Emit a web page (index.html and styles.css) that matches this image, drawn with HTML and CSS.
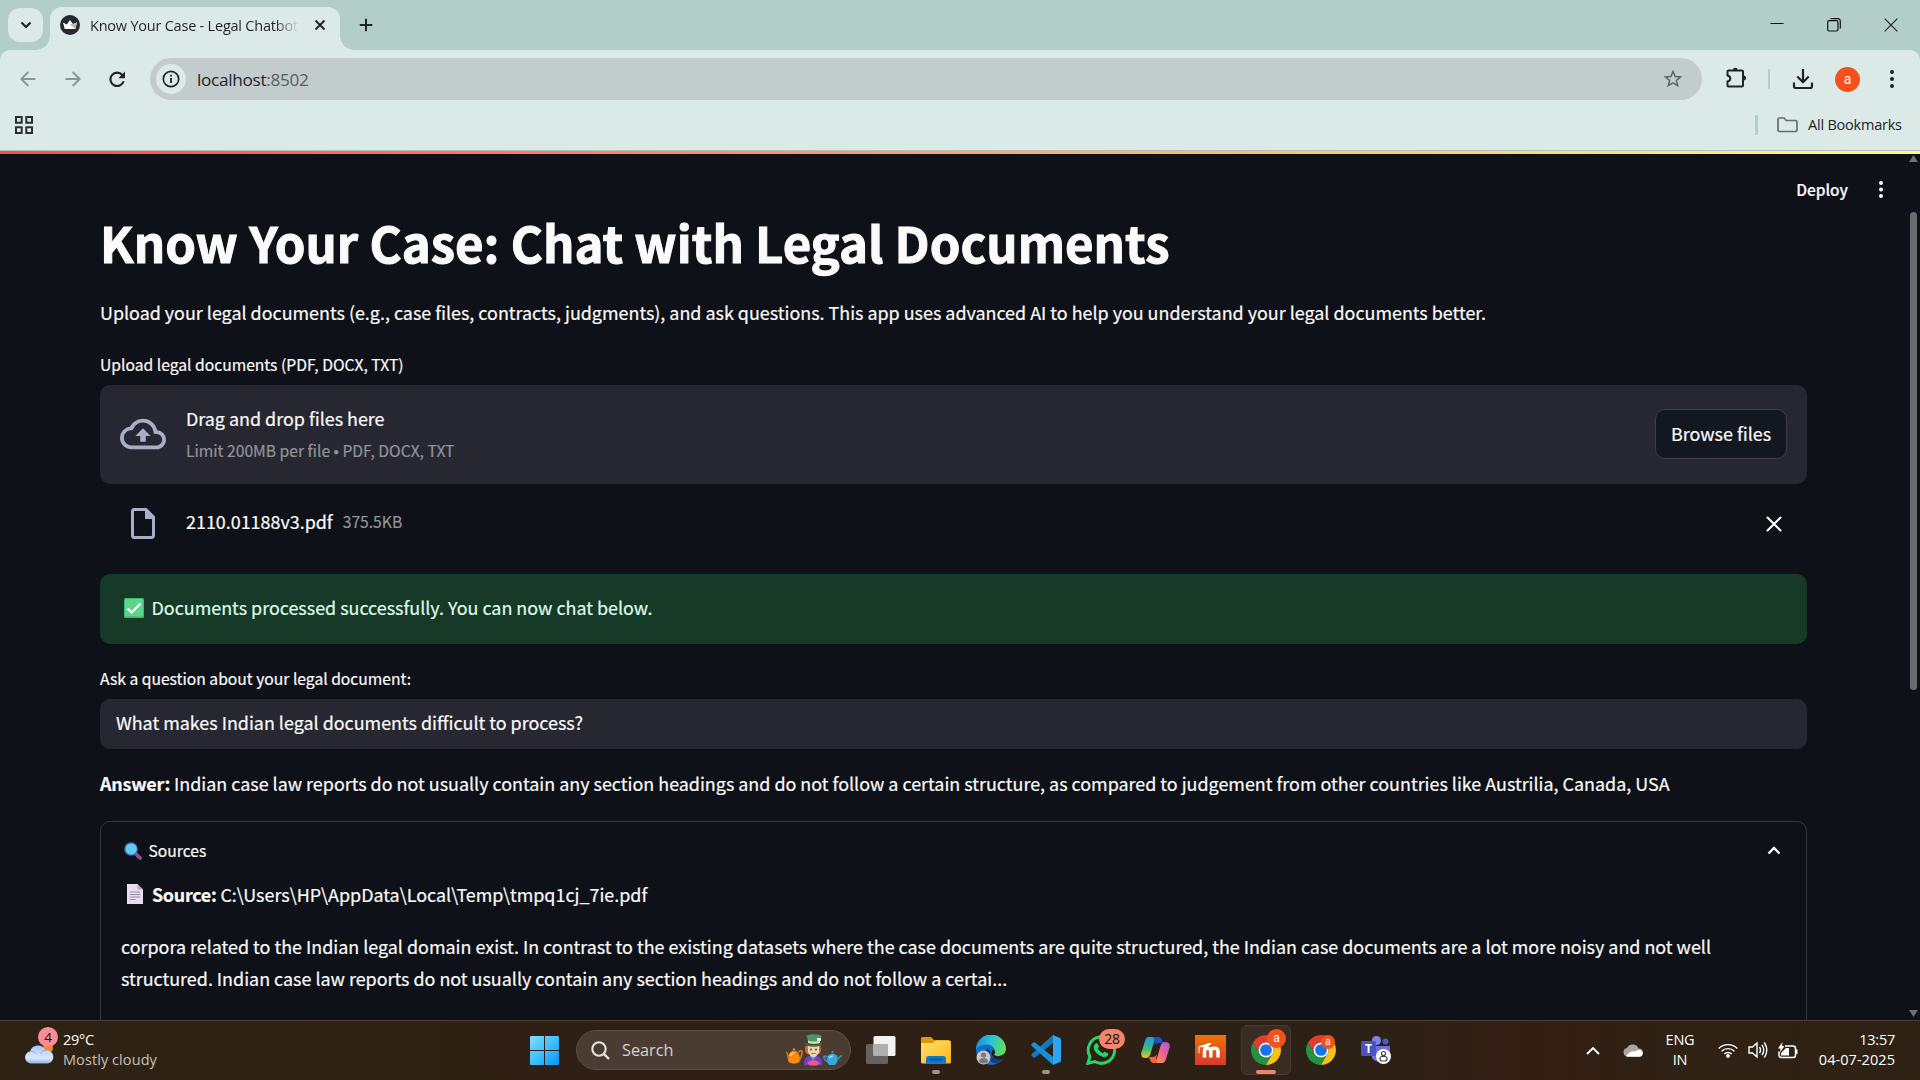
FILE: index.html
```html
<!DOCTYPE html>
<html lang="en">
<head>
<meta charset="utf-8">
<title>Know Your Case - Legal Chatbot</title>
<link rel="stylesheet" href="styles.css">
</head>
<body>
<svg class="defs" width="0" height="0" aria-hidden="true">
  <symbol id="chrome" viewBox="2 2 44 44">
    <path fill="#e33b2e" d="M24 13H43.05A22 22 0 0 0 4.95 13L14.47 29.5A11 11 0 0 1 24 13Z"/>
    <path fill="#229342" d="M4.95 13A22 22 0 0 0 24 46L33.53 29.5A11 11 0 0 1 14.47 29.5Z"/>
    <path fill="#fbc116" d="M24 46A22 22 0 0 0 43.05 13H24A11 11 0 0 1 33.53 29.5Z"/>
    <circle cx="24" cy="24" r="11" fill="#fff"/><circle cx="24" cy="24" r="8.6" fill="#1a73e8"/>
  </symbol>
</svg>
<div class="screen">
  <header class="tabstrip">
    <div class="tab-search"><svg width="12" height="8" viewBox="0 0 12 8"><path d="M1.5 1.5 6 6l4.500-4.500" fill="none" stroke="#1f2423" stroke-width="2.200"/></svg></div>
    <div class="tab">
      <svg class="favicon" width="20" height="20" viewBox="0 0 20 20"><circle cx="10" cy="10" r="10" fill="#262730"/><path d="M3 7.500 6.800 9.500 10 5l3.200 4.500L17 7.500 15.300 14H4.700Z" fill="#fff"/><path d="M10 9.500 17 7.500 15.300 14Z" fill="#b9b9bd"/></svg>
      <span class="tab-title">Know Your Case - Legal Chatbot</span>
      <svg class="tab-close" width="12" height="12" viewBox="0 0 12 12"><path d="M1.500 1.500l9 9M10.500 1.500l-9 9" stroke="#1f2423" stroke-width="1.900"/></svg>
    </div>
    <svg class="new-tab" width="14" height="14" viewBox="0 0 14 14"><path d="M7 .7v12.600M.7 7h12.600" stroke="#1f2423" stroke-width="2"/></svg>
    <div class="window-buttons">
      <svg width="14" height="14" viewBox="0 0 14 14"><path d="M.5 5.500h13" stroke="#111" stroke-width="1"/></svg>
      <svg width="14" height="14" viewBox="0 0 14 14"><rect x=".7" y="2.700" width="10.300" height="10.300" rx="1.500" fill="none" stroke="#111" stroke-width="1.200"/><path d="M3.500.7h7.300a2.500 2.500 0 0 1 2.500 2.500V10.500" fill="none" stroke="#111" stroke-width="1.200"/></svg>
      <svg width="14" height="14" viewBox="0 0 14 14"><path d="M.7.7l12.600 12.600M13.300.7.7 13.300" stroke="#222" stroke-width="1.200"/></svg>
    </div>
  </header>
  <div class="chrome">
    <div class="toolbar">
      <svg class="nav-icon" width="16" height="16" viewBox="0 0 16 16"><path d="M15.500 8H1.500M8.300 1 1.300 8l7 7" fill="none" stroke="#8b9694" stroke-width="1.900"/></svg>
      <svg class="nav-icon" width="16" height="16" viewBox="0 0 16 16"><path d="M.5 8h14M7.700 1l7 7-7 7" fill="none" stroke="#8b9694" stroke-width="1.900"/></svg>
      <svg class="nav-icon reload" width="17" height="17" viewBox="0 0 17 17"><path d="M14.600 10.200A6.700 6.700 0 1 1 13.300 4L15 5.700" fill="none" stroke="#1f2423" stroke-width="2.100"/><path d="M16 .6V7.200H9.400Z" fill="#1f2423"/></svg>
      <div class="omnibox">
        <span class="site-info"><svg width="18" height="18" viewBox="0 0 18 18"><circle cx="9" cy="9" r="7.700" fill="none" stroke="#1f2423" stroke-width="1.700"/><path d="M9 8v5M9 4.700v1.900" stroke="#1f2423" stroke-width="1.800"/></svg></span>
        <span class="url">localhost<span class="port">:8502</span></span>
        <svg class="star" width="20" height="20" viewBox="0 0 20 20"><path d="M10 2.500l2.100 5 5.400.4-4.100 3.500 1.300 5.300L10 13.900l-4.700 2.800 1.300-5.300L2.500 7.900l5.400-.4Z" fill="none" stroke="#5d6665" stroke-width="1.500"/></svg>
      </div>
      <svg class="ext" width="22" height="22" viewBox="0 0 22 22"><path d="M3.500 3.500H17a1 1 0 0 1 1 1V18.500a1 1 0 0 1-1 1H3.500a1 1 0 0 1-1-1V14.500C4.500 14 5.300 13 5.300 11.500S4.500 9 2.500 8.500V4.500a1 1 0 0 1 1-1Z" fill="none" stroke="#1f2423" stroke-width="2"/><path d="M8 3a2.300 2.300 0 0 1 4.600 0ZM18.500 8.500a2.500 2.500 0 0 1 0 5Z" fill="#1f2423"/></svg>
      <span class="bar-sep"></span>
      <svg class="dl" width="22" height="22" viewBox="0 0 22 22"><path d="M11 1v13M5.300 8.500 11 14.200l5.700-5.700" fill="none" stroke="#1f2423" stroke-width="2.200"/><path d="M2 14.500v3.800q0 1.700 1.700 1.700h14.600q1.700 0 1.700-1.700v-3.800" fill="none" stroke="#1f2423" stroke-width="2.200"/></svg>
      <span class="avatar">a</span>
      <svg class="menu" width="4" height="18" viewBox="0 0 4 18"><g fill="#1f2423"><circle cx="2" cy="2" r="2"/><circle cx="2" cy="9" r="2"/><circle cx="2" cy="16" r="2"/></g></svg>
    </div>
    <div class="bookmarks">
      <svg width="18" height="18" viewBox="0 0 18 18"><path d="M1 1h5.700v5.700H1zM11.300 1H17v5.700h-5.700zM1 11.300h5.700V17H1zM11.300 11.300H17V17h-5.700z" fill="none" stroke="#2a302f" stroke-width="2"/></svg>
      <span class="bar-sep bm-sep"></span>
      <svg width="21" height="16" viewBox="0 0 21 16"><path d="M1 13V2.500Q1 1 2.500 1H7l2.200 2.500h9.300Q20 3.500 20 5v8q0 1.500-1.500 1.500h-16Q1 14.500 1 13Z" fill="none" stroke="#666e6d" stroke-width="1.700"/></svg>
      <span class="bm-text">All Bookmarks</span>
    </div>
  </div>
  <div class="decoration"></div>
  <main class="app">
    <div class="app-header">
      <span class="deploy">Deploy</span>
      <svg width="4" height="17" viewBox="0 0 4 17"><g fill="#fafafa"><circle cx="2" cy="2" r="2"/><circle cx="2" cy="8.500" r="2"/><circle cx="2" cy="15" r="2"/></g></svg>
    </div>
    <div class="scrollbar">
      <svg width="9" height="7" viewBox="0 0 9 7"><path d="M4.500 0 9 7H0Z" fill="#6f7073"/></svg>
      <span class="thumb"></span>
      <svg width="9" height="7" viewBox="0 0 9 7"><path d="M4.500 7 0 0h9Z" fill="#6f7073"/></svg>
    </div>
    <h1>Know Your Case: Chat with Legal Documents</h1>
    <p class="intro">Upload your legal documents (e.g., case files, contracts, judgments), and ask questions. This app uses advanced AI to help you understand your legal documents better.</p>
    <div class="label upload-label">Upload legal documents (PDF, DOCX, TXT)</div>
    <div class="dropzone">
      <svg width="46" height="46" viewBox="0 0 24 24"><path fill="#a9aec6" d="M19.350 10.040A7.490 7.490 0 0 0 12 4C9.110 4 6.600 5.640 5.350 8.040A5.994 5.994 0 0 0 0 14c0 3.310 2.690 6 6 6h13c2.760 0 5-2.240 5-5 0-2.640-2.050-4.780-4.650-4.960zM19 18H6c-2.210 0-4-1.790-4-4 0-2.050 1.530-3.760 3.560-3.970l1.070-.11.500-.950A5.469 5.469 0 0 1 12 6c2.620 0 4.880 1.860 5.390 4.430l.3 1.500 1.530.110A2.980 2.980 0 0 1 22 15c0 1.650-1.350 3-3 3zM8 13h2.550v3h2.900v-3H16l-4-4z"/></svg>
      <div class="drop-text"><div>Drag and drop files here</div><div class="small muted">Limit 200MB per file • PDF, DOCX, TXT</div></div>
      <span class="browse">Browse files</span>
    </div>
    <div class="file-row">
      <svg width="24" height="31" viewBox="0 0 24 31"><path d="M3 1.500h12L22.500 9v18q0 2.500-2 2.500H3.500q-2 0-2-2V3.500q0-2 1.500-2Z" fill="none" stroke="#a9aec6" stroke-width="3"/><path d="M14 1v10h9.500Z" fill="#a9aec6"/></svg>
      <span class="file-name">2110.01188v3.pdf</span><span class="small muted file-size">375.5KB</span>
      <svg class="remove" width="16" height="16" viewBox="0 0 16 16"><path d="M1.500 1.500l13 13M14.500 1.500l-13 13" stroke="#fafafa" stroke-width="2.100" stroke-linecap="round"/></svg>
    </div>
    <div class="alert">
      <svg width="20" height="20" viewBox="0 0 20 20"><rect width="20" height="20" rx="1.500" fill="#3fb673"/><rect x="1" y="1" width="18" height="17.500" rx="1" fill="#5bd68c"/><path d="M3.500 10.500 7.800 14.500 16.500 5.500" fill="none" stroke="#fff" stroke-width="2.200"/></svg>
      <span>Documents processed successfully. You can now chat below.</span>
    </div>
    <div class="label ask-label">Ask a question about your legal document:</div>
    <div class="input">What makes Indian legal documents difficult to process?</div>
    <p class="answer"><b>Answer:</b> Indian case law reports do not usually contain any section headings and do not follow a certain structure, as compared to judgement from other countries like Austrilia, Canada, USA</p>
    <section class="expander">
      <div class="summary">
        <svg width="18" height="18" viewBox="0 0 18 18"><path d="M11 11l5 5" stroke="#8b4f92" stroke-width="3.800" stroke-linecap="round"/><circle cx="7" cy="7" r="6.800" fill="#3d6fae"/><circle cx="7.200" cy="7" r="5.600" fill="#5fccf0"/></svg>
        <span>Sources</span>
        <svg class="chev" width="14" height="9" viewBox="0 0 14 9"><path d="M1.500 7.500 7 2l5.500 5.500" fill="none" stroke="#fafafa" stroke-width="2.300"/></svg>
      </div>
      <p class="source"><svg width="16" height="20" viewBox="0 0 17 20" preserveAspectRatio="none"><path d="M0 0h11l6 5.500V20H0Z" fill="#e8def0"/><path d="M11 0v5.500h6Z" fill="#b8aac6"/><path d="M3 8h11M3 10.500h11M3 13h11M3 15.500h6" stroke="#998fa5" stroke-width="1"/></svg><span><b>Source:</b> C:\Users\HP\AppData\Local\Temp\tmpq1cj_7ie.pdf</span></p>
      <p class="excerpt">corpora related to the Indian legal domain exist. In contrast to the existing datasets where the case documents are quite structured, the Indian case documents are a lot more noisy and not well<br>structured. Indian case law reports do not usually contain any section headings and do not follow a certai...</p>
    </section>
  </main>
  <footer class="taskbar">
    <div class="weather">
      <div class="weather-icon">
        <svg width="31" height="20" viewBox="0 0 31 20"><defs><linearGradient id="cl" x1="0" y1="0" x2="0" y2="1"><stop offset="0" stop-color="#a9c4f5"/><stop offset=".7" stop-color="#dce9fc"/><stop offset="1" stop-color="#8fb0e8"/></linearGradient></defs><circle cx="24" cy="4" r="5" fill="#f08c1a"/><path d="M7 19.500a6.200 6.200 0 0 1-.8-12.300A8.200 8.200 0 0 1 21.500 6.500a6.500 6.500 0 0 1 2.500 13Z" fill="url(#cl)"/><path d="M6.500 7.200q4-.5 6 3M16 10q2-4 6.500-3.500" stroke="#8dabe6" fill="none"/></svg>
        <span class="badge-four">4</span>
      </div>
      <div class="weather-text"><div>29°C</div><div class="cond">Mostly cloudy</div></div>
    </div>
    <div class="slot start"><svg width="29" height="29" viewBox="0 0 29 29"><defs><linearGradient id="wn" x1="0" y1="0" x2="1" y2="1"><stop offset="0" stop-color="#83dcfb"/><stop offset=".5" stop-color="#3fc0fa"/><stop offset="1" stop-color="#0a94f4"/></linearGradient></defs><path fill="url(#wn)" d="M1 0h13v14H0V1q0-1 1-1ZM15 0h13q1 0 1 1v13H15ZM0 15h14v14H1q-1 0-1-1ZM15 15h14v13q0 1-1 1H15Z"/></svg></div>
    <div class="search">
      <svg width="19" height="19" viewBox="0 0 19 19"><circle cx="8" cy="8" r="6.700" fill="none" stroke="#e6e2df" stroke-width="2.100"/><path d="M12.800 12.800 18 18" stroke="#e6e2df" stroke-width="2.400"/></svg>
      <span>Search</span>
      <svg class="doodle" width="56" height="32" viewBox="0 0 56 32">
        <path d="M4 18.500q4-4 8 0 3 5 1.500 9.500-5.500 3.500-11 0Q1 23 4 18.500ZM6.500 16q1.500-4 3 0Z" fill="#f7890f"/><path d="M2.500 25Q2 19 0 18M12.500 18q4-3 3.500 1t-2.500 7" fill="none" stroke="#e07a10" stroke-width="1.600"/><path d="M4 22q2-3 4-3" stroke="#ffd36b" stroke-width="1.500" fill="none"/>
        <path d="M18 31q0-8 5-9h8q5 1 5.500 9Z" fill="#7340c8"/><path d="M24 22l3 4 3.500-4Z" fill="#3bb8ee"/><path d="M21 29q6-6 13 0l-3 2.500h-7Z" fill="#f2558c"/>
        <path d="M19.500 12q-1.500 6 2 8h12q2-3 1-8Z" fill="#d0722a"/><path d="M22 11h11v7q-2 5-5.500 5T22 18Z" fill="#f7d3ae"/><circle cx="25" cy="15.500" r="1" fill="#35563e"/><circle cx="30" cy="15.500" r="1" fill="#35563e"/><path d="M25.500 19.500h4" stroke="#b55b40"/>
        <path d="M20.500 1.500q7-2.500 15 0L33.500 9h-11Z" fill="#4c946b"/><path d="M18.500 9q9.500 4.500 18-.5l-1.500 3q-7 2.500-15 0Z" fill="#2d7450"/><path d="M22 6.500q6 2 12 0V9q-6 2-12 0Z" fill="#c4e6a8"/><path d="M31 4h4v3h-4z" fill="#fbe6dc"/>
        <path d="M41.500 22q5-5 10 0 1 6-2.500 9h-6q-3-3-1.500-9ZM45 18.500q1.500-3 3 0Z" fill="#3aa6dc"/><path d="M42 23q-5-2-4 1t4 4M51 26q4-5 5-4" fill="none" stroke="#3390cc" stroke-width="1.700"/><path d="M43 24q1.500-2 4-2" stroke="#a8e8fa" stroke-width="1.300" fill="none"/>
      </svg>
    </div>
    <div class="apps">
      <div class="slot"><svg width="30" height="28" viewBox="0 0 30 28"><rect y="8" width="22" height="20" rx="1.500" fill="#636260"/><rect x="7.500" width="22" height="20" rx="1.500" fill="#f2f2f2"/><path d="M7.500 8H22v12H9q-1.500 0-1.500-1.500Z" fill="#b0afae"/></svg></div>
      <div class="slot"><svg width="30" height="27" viewBox="0 0 30 27"><defs><linearGradient id="fo" x1="0" y1="0" x2="1" y2="1"><stop offset="0" stop-color="#ffdf73"/><stop offset="1" stop-color="#fbb818"/></linearGradient></defs><path d="M0 12V1.500Q0 0 1.500 0H10l3 3h15v9Z" fill="#dc9a08"/><path d="M0 6h12l3-2.500h13.500Q30 3.500 30 5v20q0 1.500-1.500 1.500h-27Q0 26.500 0 25Z" fill="url(#fo)"/><path d="M5 26.500V22q0-3 3-3h14q3 0 3 3v4.500Z" fill="#0f76c9"/><path d="M9 22.500h12" stroke="#084a86" stroke-width="1.400"/></svg><i class="dot"></i></div>
      <div class="slot"><svg width="30" height="30" viewBox="0 0 30 30"><defs><linearGradient id="ed" x1="0" y1=".3" x2="1" y2=".5"><stop offset="0" stop-color="#1a8fdf"/><stop offset=".5" stop-color="#2cc3d6"/><stop offset="1" stop-color="#66e04e"/></linearGradient></defs><circle cx="15" cy="15" r="15" fill="#0f6fc4"/><path d="M0 15A15 15 0 0 1 30 14c0 5-4 7-8 7-5 0-5-2-4-3.500C20 14 16 9.500 11 9.500 5 9.500 1 12 0 15Z" fill="url(#ed)"/><path d="M11 13c-3 6 1 14 9 15.500 4-1 7-4 8.500-7C24 25 12 24 14.500 16Z" fill="#123f86"/><path d="M17.500 14q3 3 .5 6 3 2 7 .5 5-2 5-6l1 6-2 2.500q-6 3-11 0-5-4-.5-9Z" fill="#2f2014"/><circle cx="7.500" cy="22.500" r="7" fill="#c9c7c5"/><circle cx="7.500" cy="20" r="2.600" fill="#7b7977"/><path d="M3 27q0-4 4.500-4t4.500 4q-4.500 3-9 0Z" fill="#7b7977"/></svg></div>
      <div class="slot"><svg width="30" height="30" viewBox="0 0 30 30"><path d="M22 0v8L3.500 23 1 21.500Q-.3 20 1 18.700Z" fill="#1277bd"/><path d="M22 30v-8L3.500 7 1 8.500q-1.300 1.500 0 2.800Z" fill="#1a8ed6"/><path d="M22 0l7 3q1 .5 1 1.500v21q0 1-1 1.500l-7 3Z" fill="#2aa6f2"/></svg><i class="dot"></i></div>
      <div class="slot"><svg width="30" height="30" viewBox="0 0 30 30"><path d="M2 28.300 3.900 21.500A13.200 13.200 0 1 1 8.800 26.500Z" fill="none" stroke="#28d366" stroke-width="3"/><path d="M9.500 8.500q1-1 2 0l1.500 3q.2.700-1.200 2 1.700 3.300 5 4.800 1.300-1.800 2-1.600l3 1.500q1 1 0 2.200-2 2.500-6 1-6.500-2.500-8-8-.3-3.200 1.700-4.900Z" fill="#28d366"/></svg><span class="badge-wa">28</span></div>
      <div class="slot"><svg width="29" height="26" viewBox="0 0 29 26"><defs><linearGradient id="ca" x1="0" y1="0" x2="0" y2="1"><stop offset="0" stop-color="#1a9df0"/><stop offset=".55" stop-color="#3cb77c"/><stop offset="1" stop-color="#f0c518"/></linearGradient><linearGradient id="cb" x1="1" y1="0" x2="0" y2="1"><stop offset="0" stop-color="#a458e8"/><stop offset=".5" stop-color="#f0648c"/><stop offset="1" stop-color="#fba33c"/></linearGradient></defs><path d="M8 0h9q-3 1-4 5l-3.500 12q-1.500 4-4.500 4-6 0-4.500-6L4 4q1-4 4-4Z" fill="url(#ca)"/><path d="M12 0h6q2 0 3 3l1 3h-4q-4 0-5 3l1-5Z" fill="#1655c8"/><path d="M21 26h-9q3-1 4-5L19.500 9q1.500-4 4.500-4 6 0 4.500 6L25 22q-1 4-4 4Z" fill="url(#cb)"/><path d="M17 26h-5q-2 0-3-3l-1-3h3q4 0 5-3l-1 5Z" fill="#f2663d"/></svg></div>
      <div class="slot"><svg width="31" height="30" viewBox="0 0 31 30"><defs><linearGradient id="mo" x1="0" y1="0" x2="0" y2="1"><stop offset="0" stop-color="#ee7204"/><stop offset="1" stop-color="#d93a2c"/></linearGradient></defs><rect width="31" height="30" fill="url(#mo)"/><path d="M9.500 22.500V16q0-2.800 3-2.800t3.300 2.800v6.500M15.800 16q0-2.800 3.500-2.800T23 16v6.500" fill="none" stroke="#fff" stroke-width="3.500"/><path d="M3.500 11.500 14 8l3 .3-5.500 4.500-7-.8v6h-1Z" fill="#fff"/></svg></div>
      <div class="slot active"><svg width="30" height="30"><use href="#chrome"/></svg><span class="profile big">a</span><i class="dot wide"></i></div>
      <div class="slot"><svg width="30" height="30"><use href="#chrome"/></svg><span class="profile">a</span></div>
      <div class="slot"><svg width="30" height="28" viewBox="0 0 30 28"><circle cx="15.500" cy="4.500" r="4.500" fill="#7b83eb"/><circle cx="24.500" cy="5.500" r="3" fill="#5059c9"/><path d="M10 10h19v8q-1 8-9 8-9 0-10-8Z" fill="#6a72dc"/><rect y="5" width="15" height="15" rx="1.500" fill="#4b53bc"/><text x="7.500" y="17" text-anchor="middle" class="teams-t">T</text><circle cx="22.500" cy="20.500" r="7.500" fill="#fff"/><circle cx="22.500" cy="17.500" r="2" fill="none" stroke="#444" stroke-width="1.200"/><rect x="19" y="20.500" width="7" height="4.500" rx="2" fill="none" stroke="#444" stroke-width="1.200"/></svg></div>
    </div>
    <div class="tray">
      <svg class="tray-chev" width="14" height="9" viewBox="0 0 14 9"><path d="M1 8l6-6 6 6" fill="none" stroke="#fff" stroke-width="1.900"/></svg>
      <svg class="onedrive" width="20" height="13" viewBox="0 0 20 13"><path d="M4.500 12.500A4.300 4.300 0 0 1 4 4 6.300 6.300 0 0 1 15.500 4.500 4 4 0 0 1 16 12.500Z" fill="#aaa5a0"/><path d="M3 12Q8 6 12 7.500q5-3.500 7.500.5 1 4-3 4.800H4.500Z" fill="#fff"/></svg>
      <div class="lang"><div>ENG</div><div>IN</div></div>
      <svg class="wifi" width="20" height="15" viewBox="0 0 20 15"><g fill="none" stroke="#fff" stroke-width="1.400"><path d="M.7 5.500a13 13 0 0 1 18.600 0M3.500 8.300a9.200 9.200 0 0 1 13 0M6.300 11a5.200 5.200 0 0 1 7.400 0"/></g><circle cx="10" cy="12.900" r="1.900" fill="#fff"/></svg>
      <svg class="speaker" width="20" height="18" viewBox="0 0 20 18"><g fill="none" stroke="#fff" stroke-width="1.400"><path d="M1 6h3.500L9 2v14l-4.500-4H1ZM11.500 6q2 3 0 6M14 3.800q3.500 5.200 0 10.400M16.300 1.500q5 7.500 0 15"/></g></svg>
      <svg class="battery" width="20" height="17" viewBox="0 0 20 17"><path d="M7 4h8q2.500 0 2.500 2.500v6.500q0 2.500-2.500 2.500H3.500Q1 15.500 1 13V9.500" fill="none" stroke="#fff" stroke-width="1.500"/><path d="M18 7.500h1.500v4.500H18ZM3 13.500V11l5-5h3v7.500ZM4.500 0 0 6.500h2.500L2 10.500 6.500 4H4Z" fill="#fff"/></svg>
      <div class="clock"><div class="time">13:57</div><div>04-07-2025</div></div>
    </div>
  </footer>
</div>
</body>
</html>
```
FILE: styles.css
```css
* { box-sizing: border-box; }
body { margin: 0; background: #0e1117; }
p, h1 { margin: 0; }
svg { display: block; flex: none; }
.defs { position: absolute; }
.screen { width: 1920px; height: 1080px; overflow: hidden; display: flex; flex-direction: column; font-family: "Open Sans", "Noto Sans", sans-serif; }

/* Browser frame */
.tabstrip { height: 50px; flex: none; background: #b3cec9; display: flex; align-items: center; padding-left: 8px; }
.tab-search { width: 35px; height: 34px; border-radius: 12px; background: #dceae7; display: flex; align-items: center; justify-content: center; }
.tab { position: relative; align-self: flex-end; width: 290px; height: 43px; margin-left: 7px; padding-left: 10px; border-radius: 12px 12px 0 0; background: #dceae7; display: flex; align-items: center; padding-bottom: 7px; }
.tab::before, .tab::after { content: ""; position: absolute; bottom: 0; width: 14px; height: 14px; }
.tab::before { left: -14px; background: radial-gradient(circle at 0 0, transparent 13.5px, #dceae7 14px); }
.tab::after { right: -14px; background: radial-gradient(circle at 100% 0, transparent 13.5px, #dceae7 14px); }
.tab-title { width: 209px; margin-left: 10px; padding-top: 1px; overflow: hidden; white-space: nowrap; font-size: 14.5px; letter-spacing: -.22px; line-height: 22px; color: #1f2423; -webkit-mask-image: linear-gradient(90deg, #000 185px, transparent 209px); mask-image: linear-gradient(90deg, #000 185px, transparent 209px); }
.tab-close { margin-left: 15px; }
.new-tab { margin-left: 19px; }
.window-buttons { margin-left: auto; display: flex; gap: 43px; margin-right: 22px; }
.chrome { height: 100px; flex: none; background: #b3cec9; display: flex; flex-direction: column; }
.toolbar { height: 58px; flex: none; padding-left: 20px; display: flex; align-items: center; background: #dceae7; border-radius: 10px 10px 0 0; }
.nav-icon { margin-right: 29px; }
.reload { margin-left: -1px; margin-right: 24px; }
.omnibox { width: 1552px; height: 42px; border-radius: 21px; background: #c3cccc; display: flex; align-items: center; padding-left: 6px; }
.site-info { width: 30px; height: 30px; border-radius: 50%; background: #dceae7; display: flex; align-items: center; justify-content: center; }
.url { margin-left: 11px; font-size: 17.2px; letter-spacing: -.3px; color: #1f2423; }
.port { color: #555e5d; }
.star { margin-left: auto; margin-right: 19px; }
.ext { margin-left: 23px; position: relative; top: -1px; }
.bar-sep { width: 2px; height: 20px; border-radius: 1px; background: #b3cec9; margin-left: 21px; }
.dl { margin-left: 22px; }
.avatar { width: 25px; height: 25px; margin-left: 21px; border-radius: 50%; background: #f6511d; color: #fff; font: 14px/24px Roboto, sans-serif; text-align: center; }
.menu { margin-left: 30px; }
.bookmarks { flex: 1; display: flex; align-items: center; padding: 0 18px 9px 15px; background: #dceae7; }
.bm-sep { margin-left: auto; margin-right: 19px; width: 3px; }
.bm-text { margin-left: 10px; width: 94px; font-size: 14.5px; letter-spacing: -.22px; color: #1f2423; white-space: nowrap; }
.decoration { height: 4px; flex: none; border-top: 1px solid #b5bfbd; background: linear-gradient(90deg, #ff4b4b, #fffd80); }

/* Application */
.app { position: relative; height: 866px; flex: none; overflow: hidden; padding: 55px 113px 0 100px; background: #0e1117; color: #fafafa; font-family: "Noto Sans CJK JP", "Noto Sans", sans-serif; font-size: 17.910px; line-height: 32px; -webkit-text-stroke: .2px currentColor; }
.app p, .app h1, .label { white-space: nowrap; }
.app-header { position: absolute; top: 20px; right: 37px; height: 30px; display: flex; align-items: center; gap: 31px; }
.deploy { font-size: 15.500px; font-weight: 500; }
.scrollbar { position: absolute; top: 1px; right: 2px; width: 9px; height: 862px; display: flex; flex-direction: column; align-items: center; }
.scrollbar svg:last-child { margin-top: auto; }
.thumb { width: 7px; height: 478px; margin-top: 50px; border-radius: 4px; background: #6b6b6d; }
h1 { font-size: 49.150px; line-height: 66px; font-weight: 700; -webkit-text-stroke: 1px currentColor; }
b { letter-spacing: -.2px; }
.intro { margin-top: 20.500px; }
.label { font-size: 15.670px; line-height: 26px; }
.upload-label { margin-top: 24px; }
.dropzone { height: 99px; margin-top: 7.500px; padding: 0 20px 1px; border-radius: 10px; background: #262730; display: flex; align-items: center; }
.drop-text { margin-left: 20px; }
.small { font-size: 15.670px; position: relative; top: 1px; }
.muted { color: #939499; }
.browse { margin-left: auto; width: 132px; height: 50px; line-height: 46px; text-align: center; border: 1px solid #3d3e47; border-radius: 10px; background: #131720; }
.file-row { height: 90px; padding: 0 25px 17px 31px; display: flex; align-items: center; }
.file-row svg { position: relative; top: 3px; }
.file-name { margin-left: 31px; }
.file-size { margin-left: 10px; }
.file-row .remove { margin-left: auto; top: 3px; }
.alert { height: 70px; padding: 17px 24px 0; border-radius: 10px; background: #173928; color: #dffde9; display: flex; gap: 7.500px; }
.alert svg { margin-top: 7px; }
.ask-label { margin-top: 22px; }
.input { height: 50px; margin-top: 7px; padding: 7px 16px 0; border-radius: 10px; background: #262730; }
.answer { margin-top: 18px; }
.expander { height: 260px; margin-top: 22px; border: 1px solid #34363d; border-radius: 10px; }
.summary { margin-top: 13px; padding: 0 25px 0 23px; display: flex; align-items: center; gap: 6.500px; font-size: 15.670px; }
.chev { margin-left: auto; margin-bottom: 2px; }
.source { margin-top: 11px; padding-left: 26px; display: flex; gap: 9px; }
.source svg { margin-top: 6px; }
.source b { letter-spacing: -.3px; }
.excerpt { margin-top: 20px; padding-left: 20px; }

/* Taskbar */
.taskbar { height: 60px; flex: none; display: flex; align-items: center; padding-bottom: 1px; border-top: 1px solid #4a4038; background: linear-gradient(90deg, #2e2214 0, #2f2214 18%, #2f1f14 28%, #2e1f14 50%, #2c2116 70%, #351e14 81%, #2f2114 87%, #2e2214 100%); color: #fff; }
.weather { width: 517px; display: flex; align-items: center; padding-left: 24px; }
.weather-icon { position: relative; padding-top: 8px; }
.badge-four { position: absolute; top: -9px; left: 14px; width: 20px; height: 20px; border-radius: 50%; background: #fc8d94; color: #111; font-size: 13.500px; line-height: 20px; text-align: center; }
.weather-text { margin-left: 8px; font-size: 14.500px; line-height: 20px; letter-spacing: -.3px; }
.cond { color: #c6c1bb; letter-spacing: .08px; }
.slot { position: relative; width: 55px; height: 50px; display: flex; align-items: center; justify-content: center; }
.search { width: 275px; height: 40px; margin-left: 4px; margin-right: 2px; padding: 0 8px 0 14px; border-radius: 20px; border: 1px solid #5d4e45; background: #4a3c33; color: #d8d3cf; display: flex; align-items: center; font-size: 16.300px; }
.search span { margin-left: 12px; }
.doodle { margin-left: auto; }
.apps { display: flex; }
.dot { position: absolute; bottom: 1px; width: 8px; height: 4px; border-radius: 2px; background: #9b948e; }
.wide { width: 20px; background: #f08468; }
.active::before { content: ""; position: absolute; inset: 0 2px 0 3px; border-radius: 6px; background: #3a2c23; border: 1px solid #483a30; }
.active svg { position: relative; }
.badge-wa { position: absolute; top: 4px; left: 26px; width: 26px; height: 20px; border-radius: 10px; background: #f5846a; color: #111; font-size: 14px; line-height: 20px; text-align: center; letter-spacing: -.3px; }
.profile { position: absolute; top: 10px; left: 28px; width: 14px; height: 14px; border-radius: 50%; background: #f6511d; color: #fff; font: 10px/14px Roboto, sans-serif; text-align: center; }
.big { top: 4px; left: 29px; width: 19px; height: 19px; font-size: 12px; line-height: 18px; }
.teams-t { font: 700 12px "Open Sans", sans-serif; fill: #fff; }
.tray { margin-left: auto; display: flex; align-items: center; padding-right: 25px; font-size: 14.500px; line-height: 20px; }
.onedrive { margin-left: 23px; }
.lang { width: 40px; margin-left: 17px; text-align: center; letter-spacing: -.2px; }
.wifi { margin-left: 18px; }
.speaker, .battery { margin-left: 10px; }
.clock { width: 97px; text-align: right; letter-spacing: .05px; }
.time { letter-spacing: -.25px; }
```
